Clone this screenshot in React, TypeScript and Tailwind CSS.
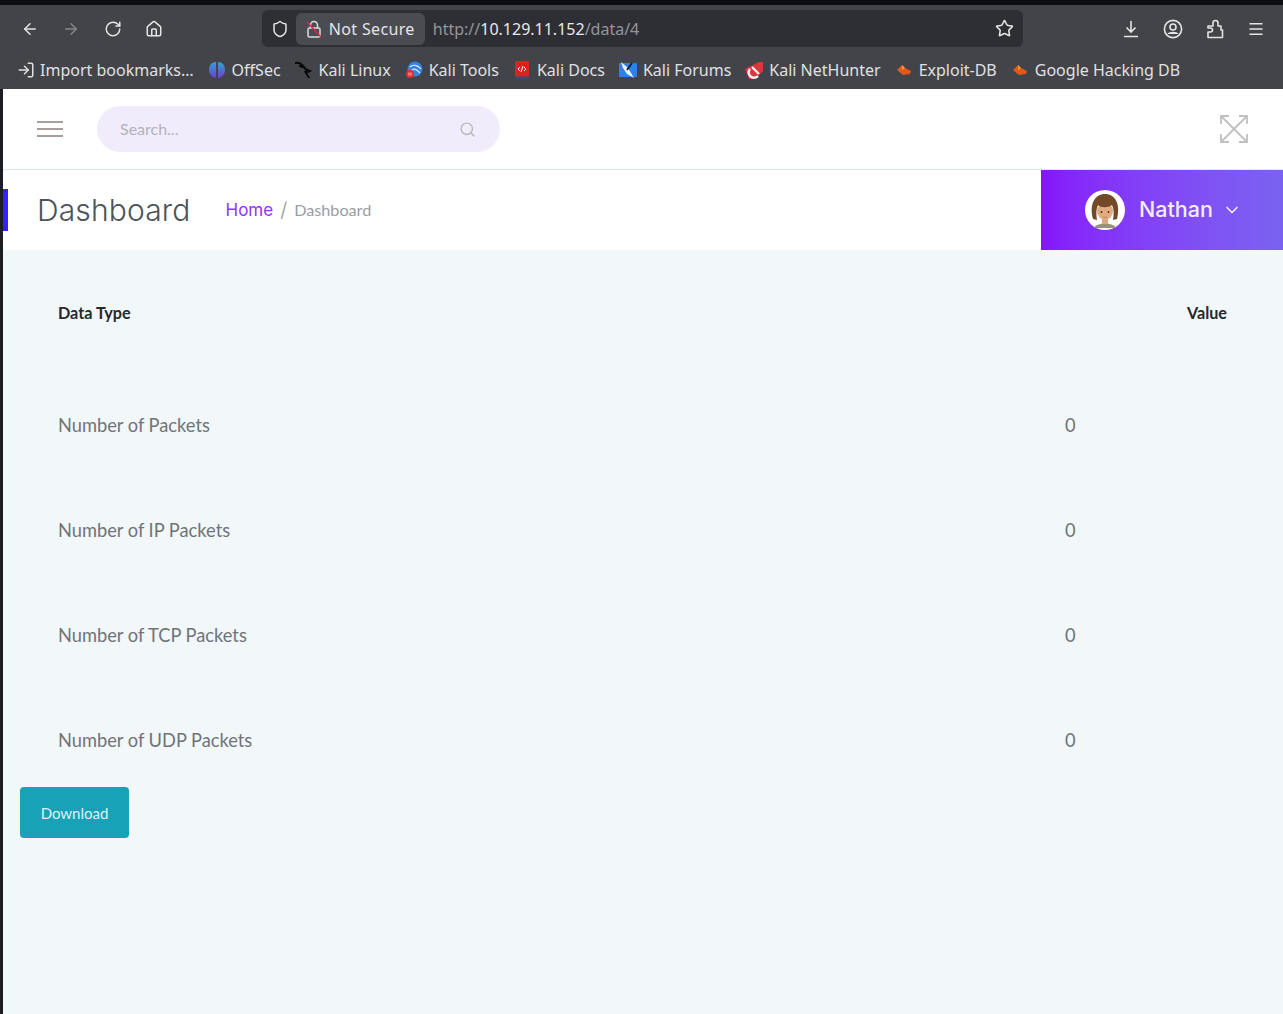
import { ArrowLeft, ArrowRight, ChevronDown, Home, LogIn, Menu, RotateCw, Search, Shield, Star } from 'lucide-react'

const bookmarks = [
  { name: 'OffSec', icon: <OffSecIcon /> },
  { name: 'Kali Linux', icon: <KaliIcon /> },
  { name: 'Kali Tools', icon: <ToolsIcon /> },
  { name: 'Kali Docs', icon: <DocsIcon /> },
  { name: 'Kali Forums', icon: <ForumsIcon /> },
  { name: 'Kali NetHunter', icon: <NetHunterIcon /> },
  { name: 'Exploit-DB', icon: <BugIcon /> },
  { name: 'Google Hacking DB', icon: <BugIcon /> },
]

const rows = ['Number of Packets', 'Number of IP Packets', 'Number of TCP Packets', 'Number of UDP Packets']

function OffSecIcon() {
  return (
    <svg viewBox="0 0 18 18" className="size-[18px]">
      <defs>
        <linearGradient id="offsec" x1="0" y1="0" x2="0" y2="1">
          <stop offset="0" stopColor="#2fa4d8" />
          <stop offset="1" stopColor="#6a3fd0" />
        </linearGradient>
      </defs>
      <path d="M8 1 C3 1 1 5 1 9 C1 13 4 17 8 17 Z M10 1 C15 1 17 5 17 9 C17 13 14 17 10 17 Z" fill="url(#offsec)" />
    </svg>
  )
}

function KaliIcon() {
  return (
    <svg viewBox="0 0 18 18" className="size-[18px]">
      <path d="M0 2 C4 1 7 3 9 6 C7 6 6 5 4 5 M9 6 C10 9 13 9 15 10 C13 11 11 11 10 10 C11 13 13 14 14 17" fill="none" stroke="#08090b" strokeWidth="2" />
    </svg>
  )
}

function ToolsIcon() {
  return (
    <svg viewBox="0 0 18 18" className="size-[18px]">
      <circle cx="10" cy="8" r="7.5" fill="#3b82e0" />
      <path d="M5 6 C8 3 13 4 16 8 M7 9 C10 7 12 9 15 12" fill="none" stroke="#dbe7f7" strokeWidth="1.2" />
      <circle cx="5" cy="13" r="4" fill="#e0302f" />
      <path d="M4 11.5 V14.5 M6 11.5 V14.5" stroke="#f7d6d6" strokeWidth="0.9" />
    </svg>
  )
}

function DocsIcon() {
  return (
    <svg viewBox="0 0 18 18" className="size-[18px]">
      <rect x="2" y="0" width="14" height="18" rx="1" fill="#d8231f" />
      <rect x="2" y="15.5" width="14" height="2.5" fill="#3a4a78" />
      <path d="M7 6 L5 8 L7 10 M11 6 L13 8 L11 10 M10 5 L8 11" stroke="#fff" strokeWidth="1" fill="none" />
    </svg>
  )
}

function ForumsIcon() {
  return (
    <svg viewBox="0 0 18 18" className="size-[18px]">
      <rect x="0" y="2" width="18" height="14" rx="1" fill="#2f80ed" />
      <path d="M2 1 L9 7 L15 17 L8 13 L4 7 Z" fill="#eef2f8" />
      <path d="M13 2 L8 9" stroke="#14171c" strokeWidth="1.8" />
    </svg>
  )
}

function NetHunterIcon() {
  return (
    <svg viewBox="0 0 18 18" className="size-[18px]">
      <path d="M0 8 L14 1 L18 1 L18 10 L10 18 L4 18 Z" fill="#d9363e" />
      <path d="M5 8 A5 5 0 1 0 13 15" fill="none" stroke="#f4f4f4" strokeWidth="2.4" />
      <path d="M7 6 L14 13" stroke="#f4f4f4" strokeWidth="2.2" />
    </svg>
  )
}

function BugIcon() {
  return (
    <svg viewBox="0 0 18 18" className="size-[18px]">
      <path d="M2 9 L7 4 L10 7 L16 10 L15 13 L8 14 Z" fill="#e2591b" />
      <path d="M7 4 L10 7 L7 9 Z" fill="#f59a3c" />
    </svg>
  )
}

function CrossedLock() {
  return (
    <svg viewBox="0 0 18 18" className="size-[18px]" fill="none">
      <rect x="3" y="8" width="12" height="9" rx="1.5" stroke="#dcdcde" strokeWidth="1.5" />
      <path d="M5.5 8 V5 A3.5 3.5 0 0 1 12.5 5 V8" stroke="#dcdcde" strokeWidth="1.5" />
      <path d="M2 2 L16 17" stroke="#e0264e" strokeWidth="1.5" />
    </svg>
  )
}

function TrayDownload() {
  return (
    <svg viewBox="0 0 18 18" className="size-[18px]" fill="none" stroke="currentColor" strokeWidth="1.6">
      <path d="M9 1 V12 M4.5 7.5 L9 12 L13.5 7.5 M2 16.5 H16" />
    </svg>
  )
}

function Profile() {
  return (
    <svg viewBox="0 0 20 20" className="size-5" fill="none" stroke="currentColor" strokeWidth="1.6">
      <circle cx="10" cy="10" r="8.6" />
      <circle cx="10" cy="8" r="3" />
      <path d="M4.5 15 C6 12 14 12 15.5 15" fill="currentColor" stroke="none" />
    </svg>
  )
}

function Extension() {
  return (
    <svg viewBox="0 0 18 20" className="h-5 w-[18px]" fill="none" stroke="currentColor" strokeWidth="1.6" strokeLinejoin="round">
      <path d="M2 7 H7 V4 A2.5 2.5 0 0 1 12 4 V7 H15 V11 H16.5 V18.5 H2 V13 H4.5 A2 2 0 0 0 4.5 9 H2 Z" />
    </svg>
  )
}

function Avatar() {
  return (
    <svg viewBox="0 0 40 40" className="size-10">
      <circle cx="20" cy="20" r="20" fill="#fff" />
      <path d="M9 38 C11 32 29 32 31 38 Z" fill="#9a9278" />
      <rect x="17" y="26" width="6" height="8" fill="#dca77c" />
      <ellipse cx="20" cy="21" rx="8" ry="9" fill="#e3ac80" />
      <path d="M8 29 C4 14 10 4 20 4 C30 4 36 14 32 29 L28 30 C29 24 29 19 27 15 C23 18 16 18 13 15 C11 19 11 24 12 30 Z" fill="#74492a" />
      <circle cx="16.5" cy="22" r="0.9" fill="#4a2c17" />
      <circle cx="23.5" cy="22" r="0.9" fill="#4a2c17" />
      <path d="M18 27 Q20 28 22 27" stroke="#b5714f" strokeWidth="0.8" fill="none" />
    </svg>
  )
}

function ExpandIcon() {
  return (
    <svg viewBox="0 0 28 28" className="size-7" fill="none" stroke="#c0c0c0" strokeWidth="1.8">
      <path d="M1 9 V1 H9 M19 1 H27 V9 M27 19 V27 H19 M9 27 H1 V19 M1 1 L27 27 M27 1 L1 27" />
    </svg>
  )
}

export default function App() {
  return (
    <div className="flex h-[1014px] w-[1283px] flex-col overflow-hidden bg-[#f2f7fa] font-['Lato',sans-serif]">
      {/* browser chrome */}
      <div className="h-[5px] bg-[#0b0d12]" />
      <div className="flex h-[47px] items-center bg-[#42444a] pl-[21px] pr-[18px] font-['Noto_Sans',sans-serif] text-[#e4e4e6]">
        <div className="flex items-center gap-[23.25px]">
          <ArrowLeft className="size-[18px]" />
          <ArrowRight className="size-[18px] text-[#85868a]" />
          <RotateCw className="size-[18px]" />
          <Home className="size-[18px]" />
        </div>
        <div className="ml-[99px] flex h-[37px] w-[761px] items-center rounded-md bg-[#2e2f34]">
          <Shield className="ml-[9px] size-[18px]" />
          <div className="ml-[7px] flex h-[32px] w-[129px] items-center rounded-md bg-[#4b4c52] pl-[9px] text-[16px]">
            <CrossedLock />
            <span className="ml-[6px] tracking-[0.35px]">Not Secure</span>
          </div>
          <div className="ml-[8px] flex-1 text-[16px] text-[#95969b]">
            http://<span className="text-[#e8e8ea]">10.129.11.152</span>/data/4
          </div>
          <Star className="mr-[9px] size-[19px]" />
        </div>
        <div className="ml-auto flex items-center gap-[23px]">
          <TrayDownload />
          <Profile />
          <Extension />
          <Menu className="size-[18px]" />
        </div>
      </div>
      <div className="flex h-[37px] items-center gap-[14px] bg-[#42444a] pb-[2px] pl-[17px] font-['Noto_Sans',sans-serif] text-[16px] text-[#e0e0e2]">
        <div className="flex items-center gap-[5px]">
          <LogIn className="size-[18px]" />
          <span>Import bookmarks…</span>
        </div>
        {bookmarks.map(({ name, icon }) => (
          <div key={name} className="flex items-center gap-[6px]">
            {icon}
            <span>{name}</span>
          </div>
        ))}
      </div>

      {/* page */}
      <div className="flex flex-1 flex-col border-l-[3px] border-[#1c1e22]">
        <div className="flex h-[81px] items-center border-b border-[#dfe9ea] bg-white pl-[34px] pr-[35px]">
          <div className="flex w-[26px] flex-col gap-[5px]">
            <div className="h-0.5 bg-[#a89f9c]" />
            <div className="h-0.5 bg-[#a89f9c]" />
            <div className="h-0.5 bg-[#a89f9c]" />
          </div>
          <div className="ml-[34px] flex h-[46px] w-[403px] items-center justify-between rounded-full bg-[#f1ecfb] pl-[23px] pr-[24px]">
            <span className="text-[16px] text-[#b5b1ba]">Search...</span>
            <Search className="size-[17px] text-[#b8b8bc]" />
          </div>
          <div className="ml-auto">
            <ExpandIcon />
          </div>
        </div>
        <div className="flex h-[80px] items-center bg-white">
          <div className="h-[42px] w-[5px] bg-[#3322ff]" />
          <h1 className="ml-[29px] font-['Inter',sans-serif] text-[30px] font-light tracking-[0.15px] text-[#4d5358]">Dashboard</h1>
          <div className="ml-[35px] flex items-center font-['Inter',sans-serif] text-[17px]">
            <span className="pt-[2px] text-[#9333f5]">Home</span>
            <span className="mx-[7px] text-[20px] font-light text-[#8f9599]">/</span>
            <span className="font-['Lato',sans-serif] text-[16.2px] text-[#98a0a3]">Dashboard</span>
          </div>
          <div className="ml-auto flex h-full w-[242px] items-center bg-gradient-to-r from-[#8612fb] to-[#7b62f0] pl-[44px]">
            <Avatar />
            <span className="ml-[14px] pb-[2px] font-['Inter',sans-serif] text-[21.5px] font-medium text-[#f3ecff]">Nathan</span>
            <ChevronDown className="ml-[9px] size-5 text-[#f3ecff]" />
          </div>
        </div>

        <div className="px-[55px] pt-[51px]">
          <div className="flex justify-between pr-[1px] text-[16.2px] font-bold text-[#26292c]">
            <span>Data Type</span>
            <span>Value</span>
          </div>
          <div className="mt-[36px] flex flex-col">
            {rows.map((row) => (
              <div key={row} className="flex h-[105px] items-end pb-[27px] text-[18.25px] text-[#6f7477]">
                <span className="w-[1007px]">{row}</span>
                <span>0</span>
              </div>
            ))}
          </div>
        </div>
        <button className="ml-[17px] mt-[6px] flex h-[51px] w-[109px] items-center justify-center rounded bg-[#17a2b8] text-[15px] text-[#dff3f5]">
          Download
        </button>
      </div>
    </div>
  )
}
